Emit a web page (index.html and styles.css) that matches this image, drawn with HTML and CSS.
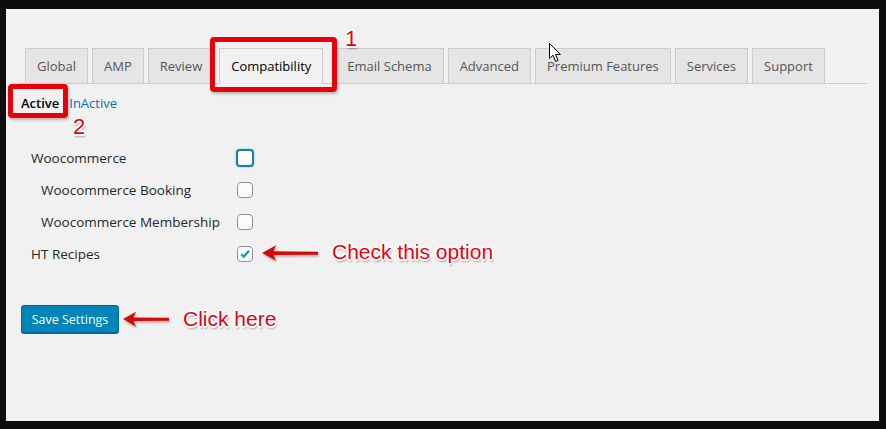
FILE: index.html
```html
<!DOCTYPE html>
<html lang="en">
<head>
  <meta charset="UTF-8" />
  <title>Compatibility Settings</title>
  <link rel="stylesheet" href="styles.css">
</head>
<body>
  <div class="panel">

    <nav class="nav-tabs">
      <a class="nav-tab">Global</a>
      <a class="nav-tab">AMP</a>
      <a class="nav-tab">Review</a>
      <a class="nav-tab nav-tab-active">Compatibility</a>
      <a class="nav-tab">Email Schema</a>
      <a class="nav-tab">Advanced</a>
      <a class="nav-tab">Premium Features</a>
      <a class="nav-tab">Services</a>
      <a class="nav-tab">Support</a>
    </nav>

    <div class="subtabs">
      <a class="current">Active</a>
      <a>InActive</a>
    </div>

    <div class="options">
      <div class="row">
        <span class="label">Woocommerce</span>
        <span class="cb cb-focus"></span>
      </div>
      <div class="row">
        <span class="label label-sub">Woocommerce Booking</span>
        <span class="cb"></span>
      </div>
      <div class="row">
        <span class="label label-sub">Woocommerce Membership</span>
        <span class="cb"></span>
      </div>
      <div class="row">
        <span class="label">HT Recipes</span>
        <span class="cb">
          <svg width="16" height="16" viewBox="0 0 16 16"><path d="M3.6 8.2 L6.6 11.2 L12.6 4.3" fill="none" stroke="#1e8cbe" stroke-width="2.4"/></svg>
        </span>
        <svg class="arrow arrow-check" width="58" height="20" viewBox="0 0 58 20"><path d="M1 10 L15 2.3 L12.5 8.2 L57 8.7 L57 11.7 L12.5 12.1 L15 17.7 Z" fill="#d40a0a"/></svg>
        <span class="note">Check this option</span>
      </div>
    </div>

    <div class="submit">
      <button class="button-primary">Save Settings</button>
      <svg class="arrow arrow-save" width="48" height="18" viewBox="0 0 48 18"><path d="M1 9 L14 1.8 L11.5 7.4 L47 7.8 L47 10.7 L11.5 11.1 L14 16.7 Z" fill="#d40a0a"/></svg>
      <span class="note">Click here</span>
    </div>

    <!-- annotations -->
    <div class="mark mark-tab"></div>
    <div class="mark mark-sub"></div>
    <span class="num num-1">1</span>
    <span class="num num-2">2</span>

    <svg class="cursor" width="13" height="20" viewBox="0 0 13 20"><path d="M0.5 0.5 L0.5 15.5 L4 12.2 L6.6 18.5 L9 17.4 L6.5 11.4 L11.5 11.4 Z" fill="#fff" stroke="#000" stroke-width="1"/></svg>
  </div>
</body>
</html>
```

FILE: styles.css
```css
body {
  margin: 0;
  background: #0d0d0d;
  font-family: 'Open Sans', 'Noto Sans', sans-serif;
  color: #23282d;
}
.panel {
  position: relative;
  margin: 9px 7px 0 6px;
  height: 412px;
  background: #f1f1f1;
  padding-top: 39px;
  box-sizing: border-box;
}
.nav-tabs {
  display: flex;
  align-items: flex-end;
  margin: 0 12px 0 13px;
  border-bottom: 1px solid #ccc;
  height: 35px;
}
.nav-tab {
  display: block;
  height: 34px;
  line-height: 34px;
  padding: 0 11px;
  margin-left: 4px;
  border: 1px solid #ccc;
  border-bottom: none;
  background: #e5e5e5;
  color: #555;
  font-size: 13px;
  white-space: nowrap;
}
.nav-tab:first-child {
  margin-left: 6px;
}
.nav-tab-active {
  background: #f1f1f1;
  color: #000;
  margin: 0 8px -1px 5px;
  height: 35px;
}
.subtabs {
  display: flex;
  gap: 10px;
  margin: 9px 0 0 15px;
  font-size: 13px;
  line-height: 20px;
}
.subtabs a {
  color: #0073aa;
}
.subtabs a.current {
  color: #000;
  font-weight: 600;
}
.options {
  margin: 29px 0 0 25px;
}
.row {
  display: flex;
  align-items: center;
  height: 32px;
}
.label {
  width: 206px;
  box-sizing: border-box;
  font-size: 13.5px;
  color: #23282d;
}
.label-sub {
  padding-left: 10px;
}
.cb {
  width: 16px;
  height: 16px;
  box-sizing: border-box;
  border: 1px solid #8c8f94;
  border-radius: 4px;
  background: #fbfbfb;
  display: flex;
  align-items: center;
  justify-content: center;
}
.cb svg {
  display: block;
}
.cb-focus {
  width: 18px;
  height: 18px;
  margin-left: -1px;
  border: 2px solid #1f7ea8;
  box-shadow: 0 0 2px rgba(30, 140, 190, 0.6);
}
.arrow {
  display: block;
  filter: drop-shadow(1px 2px 1px rgba(0, 0, 0, 0.25));
}
.arrow-check {
  margin: -3px 0 0 8px;
}
.note {
  font-family: 'Liberation Sans', Arial, sans-serif;
  font-size: 21px;
  color: #e8000e;
  margin-left: 13px;
  text-shadow: -1px -1px 0 #fff, 1px -1px 0 #fff, -1px 1px 0 #fff, 1px 1px 0 #fff,
    0 -2px 0 #fff, 0 2px 0 #fff, -2px 0 0 #fff, 2px 0 0 #fff, 1px 3px 2px rgba(0, 0, 0, 0.35);
}
.arrow-check + .note {
  margin-top: -4px;
}
.submit {
  display: flex;
  align-items: center;
  margin: 35px 0 0 15px;
}
.button-primary {
  width: 98px;
  height: 28px;
  padding: 0;
  background: #0085ba;
  border: 1px solid #006799;
  border-radius: 3px;
  box-shadow: 0 1px 0 #006799;
  color: #fff;
  font-family: 'Open Sans', 'Noto Sans', sans-serif;
  font-size: 12.5px;
}
.arrow-save {
  margin-left: 3px;
}
.mark {
  position: absolute;
  border: 5px solid #e8000b;
  border-radius: 4px;
  box-shadow: 1px 2px 3px rgba(0, 0, 0, 0.25);
}
.mark-tab {
  left: 204px;
  top: 28px;
  width: 117px;
  height: 45px;
}
.mark-sub {
  left: 2px;
  top: 75px;
  width: 50px;
  height: 24px;
}
.num {
  position: absolute;
  font-family: 'Liberation Sans', Arial, sans-serif;
  font-size: 22px;
  line-height: 22px;
  color: #e8000e;
  text-shadow: -1px -1px 0 #fff, 1px -1px 0 #fff, -1px 1px 0 #fff, 1px 1px 0 #fff,
    0 -2px 0 #fff, 0 2px 0 #fff, -2px 0 0 #fff, 2px 0 0 #fff, 1px 3px 2px rgba(0, 0, 0, 0.35);
}
.num-1 {
  left: 339px;
  top: 19px;
}
.num-2 {
  left: 67px;
  top: 107px;
}
.cursor {
  position: absolute;
  left: 543px;
  top: 34px;
}
```
